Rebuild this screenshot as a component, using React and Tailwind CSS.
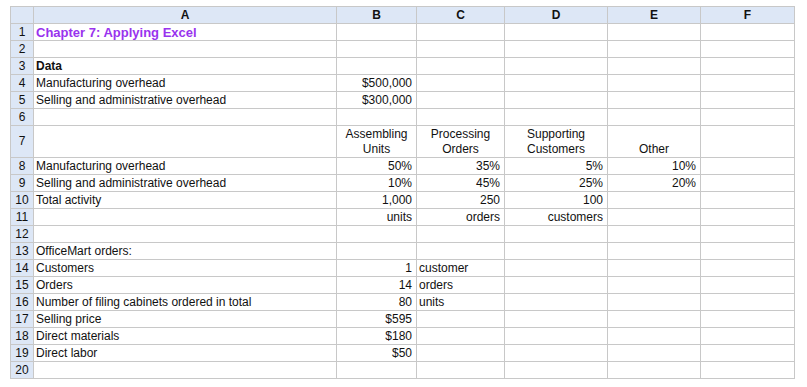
import React from "react";

const cols = ["A", "B", "C", "D", "E", "F"];

const rows = [
  { n: 1, a: "Chapter 7: Applying Excel", title: true },
  { n: 2 },
  { n: 3, a: "Data", bold: true },
  { n: 4, a: "Manufacturing overhead", b: "$500,000" },
  { n: 5, a: "Selling and administrative overhead", b: "$300,000" },
  { n: 6 },
  { n: 7, tall: true },
  { n: 8, a: "Manufacturing overhead", b: "50%", c: "35%", d: "5%", e: "10%" },
  { n: 9, a: "Selling and administrative overhead", b: "10%", c: "45%", d: "25%", e: "20%" },
  { n: 10, a: "Total activity", b: "1,000", c: "250", d: "100" },
  { n: 11, b: "units", c: "orders", d: "customers" },
  { n: 12 },
  { n: 13, a: "OfficeMart orders:" },
  { n: 14, a: "Customers", b: "1", cl: "customer" },
  { n: 15, a: "Orders", b: "14", cl: "orders" },
  { n: 16, a: "Number of filing cabinets ordered in total", b: "80", cl: "units" },
  { n: 17, a: "Selling price", b: "$595" },
  { n: 18, a: "Direct materials", b: "$180" },
  { n: 19, a: "Direct labor", b: "$50" },
  { n: 20 },
];

const cell = "border border-[#c8c8c8] pl-[2px] pr-[2px] py-0 whitespace-nowrap overflow-hidden";
const num = "text-right !pr-[4px]";

function Header({ label }) {
  return (
    <td className={`${cell} bg-[#dde7f6] text-center align-middle`}>
      {label}
    </td>
  );
}

export default function App() {
  return (
    <div className="w-[807px] h-[387px] bg-white pt-[6px] pl-[10px] font-['Liberation_Sans',Arial,sans-serif] text-[12px] leading-[15px] text-[#111]">
      <table className="table-fixed border-collapse w-[784px]">
        <colgroup>
          <col className="w-[23px]" />
          <col className="w-[303px]" />
          <col className="w-[80px]" />
          <col className="w-[88px]" />
          <col className="w-[103px]" />
          <col className="w-[93px]" />
          <col className="w-[94px]" />
        </colgroup>
        <tbody>
          <tr className="h-[17px]">
            <td className={`${cell} bg-[#dde7f6]`}></td>
            {cols.map((c) => (
              <Header key={c} label={<span className="font-bold">{c}</span>} />
            ))}
          </tr>
          {rows.map((r) => {
            if (r.tall) {
              return (
                <tr key={r.n} className="h-[32px]">
                  <Header label={r.n} />
                  <td className={cell}></td>
                  <td className={`${cell} text-center align-bottom`}>
                    Assembling
                    <br />
                    Units
                  </td>
                  <td className={`${cell} text-center align-bottom`}>
                    Processing
                    <br />
                    Orders
                  </td>
                  <td className={`${cell} text-center align-bottom`}>
                    Supporting
                    <br />
                    Customers
                  </td>
                  <td className={`${cell} text-center align-bottom`}>Other</td>
                  <td className={cell}></td>
                </tr>
              );
            }
            return (
              <tr key={r.n} className="h-[17px]">
                <Header label={r.n} />
                <td
                  className={`${cell} ${
                    r.title
                      ? "font-bold text-[#9933ee] text-[13px]"
                      : r.bold
                      ? "font-bold"
                      : ""
                  }`}
                >
                  {r.a}
                </td>
                <td className={`${cell} ${num}`}>{r.b}</td>
                <td className={`${cell} ${r.cl ? "text-left" : num}`}>
                  {r.cl || r.c}
                </td>
                <td className={`${cell} ${num}`}>{r.d}</td>
                <td className={`${cell} ${num}`}>{r.e}</td>
                <td className={cell}></td>
              </tr>
            );
          })}
        </tbody>
      </table>
    </div>
  );
}
